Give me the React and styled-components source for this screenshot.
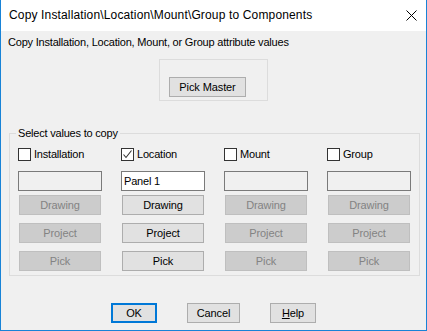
import styled, { createGlobalStyle } from 'styled-components';

const GlobalStyle = createGlobalStyle`
  html, body {
    margin: 0;
    padding: 0;
    background: #ffffff;
  }
  * {
    box-sizing: border-box;
  }
`;

const Window = styled.div`
  width: 427px;
  height: 331px;
  display: flex;
  flex-direction: column;
  border: 1px solid #1883d7;
  border-top: none;
  font-family: 'Liberation Sans', Arial, sans-serif;
  font-size: 11px;
  letter-spacing: -0.2px;
  color: #000;
`;

const TitleBar = styled.div`
  height: 31px;
  flex: 0 0 31px;
  background: #ffffff;
  display: flex;
  align-items: center;
  justify-content: space-between;
  padding: 0 9px 0 8px;
  span {
    font-size: 12px;
    letter-spacing: 0.15px;
    margin-top: -2px;
  }
`;

const Body = styled.div`
  flex: 1;
  background: #f0f0f0;
  display: flex;
  flex-direction: column;
  padding-top: 5px;
`;

const Intro = styled.div`
  line-height: 13px;
  padding-left: 7px;
`;

const PickBox = styled.div`
  align-self: center;
  width: 109px;
  height: 42px;
  margin-top: 10px;
  border: 1px solid #dcdcdc;
  padding: 17px 0 0 9px;
`;

const Button = styled.button`
  display: block;
  height: 20px;
  width: ${(p) => p.$w || 82}px;
  padding: 0;
  margin: 0;
  font-family: inherit;
  font-size: 11px;
  letter-spacing: -0.1px;
  line-height: 16px;
  color: ${(p) => (p.disabled ? '#838383' : '#000')};
  background: ${(p) => (p.disabled ? '#cccccc' : '#e1e1e1')};
  border: ${(p) =>
    p.$default ? '2px solid #0078d7' : p.disabled ? '1px solid #bfbfbf' : '1px solid #adadad'};
  u {
    text-decoration: underline;
  }
`;

const SelectBox = styled.fieldset`
  margin: 26px 0 0 8px;
  width: 411px;
  border: 1px solid #dcdcdc;
  padding: 8px 6px 4px 6px;
  legend {
    padding: 0 2px;
    line-height: 13px;
    font-size: 11px;
  }
`;

const Columns = styled.div`
  display: grid;
  grid-template-columns: repeat(4, 84px);
  column-gap: 19px;
  padding-left: 2px;
`;

const Column = styled.div`
  display: flex;
  flex-direction: column;
  align-items: flex-start;
`;

const CheckRow = styled.label`
  display: flex;
  align-items: center;
  height: 13px;
  line-height: 13px;
  gap: 3px;
  margin-bottom: 10px;
`;

const Box = styled.span`
  width: 13px;
  height: 13px;
  border: 1px solid #333333;
  background: #ffffff;
  display: flex;
  svg {
    display: block;
  }
`;

const TextBox = styled.div`
  width: 84px;
  height: 20px;
  border: 1px solid #7a7a7a;
  background: ${(p) => (p.$enabled ? '#ffffff' : '#f0f0f0')};
  padding: 2px 0 0 2px;
  line-height: 14px;
  margin-bottom: 4px;
`;

const ButtonStack = styled.div`
  display: flex;
  flex-direction: column;
  gap: 8px;
  padding-left: 1px;
`;

const Footer = styled.div`
  display: flex;
  justify-content: center;
  gap: 30px;
  margin-top: 27px;
`;

const CloseIcon = () => (
  <svg width="11" height="11" viewBox="0 0 11 11">
    <path d="M0.5 0.5 L10.5 10.5 M10.5 0.5 L0.5 10.5" stroke="#000" strokeWidth="1" fill="none" />
  </svg>
);

const Check = () => (
  <svg width="11" height="11" viewBox="0 0 11 11">
    <path d="M1.5 5.5 L4 8.5 L9.5 1.5" stroke="#333" strokeWidth="1.1" fill="none" />
  </svg>
);

const columns = [
  { name: 'Installation', checked: false, value: '' },
  { name: 'Location', checked: true, value: 'Panel 1' },
  { name: 'Mount', checked: false, value: '' },
  { name: 'Group', checked: false, value: '' },
];

export default function App() {
  return (
    <>
      <GlobalStyle />
      <Window>
        <TitleBar>
          <span>Copy Installation\Location\Mount\Group to Components</span>
          <CloseIcon />
        </TitleBar>
        <Body>
          <Intro>Copy Installation, Location, Mount, or Group attribute values</Intro>
          <PickBox>
            <Button $w={77}>Pick Master</Button>
          </PickBox>
          <SelectBox>
            <legend>Select values to copy</legend>
            <Columns>
              {columns.map((c) => (
                <Column key={c.name}>
                  <CheckRow>
                    <Box>{c.checked && <Check />}</Box>
                    {c.name}
                  </CheckRow>
                  <TextBox $enabled={c.checked}>{c.value}</TextBox>
                  <ButtonStack>
                    <Button disabled={!c.checked}>Drawing</Button>
                    <Button disabled={!c.checked}>Project</Button>
                    <Button disabled={!c.checked}>Pick</Button>
                  </ButtonStack>
                </Column>
              ))}
            </Columns>
          </SelectBox>
          <Footer>
            <Button $w={46} $default>OK</Button>
            <Button $w={53}>Cancel</Button>
            <Button $w={46}>
              <u>H</u>elp
            </Button>
          </Footer>
        </Body>
      </Window>
    </>
  );
}
